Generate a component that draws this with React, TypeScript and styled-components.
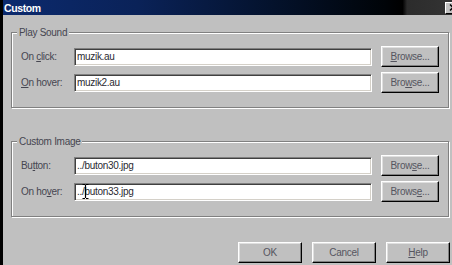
import React from "react";
import styled, { createGlobalStyle } from "styled-components";

const Global = createGlobalStyle`
  html, body {
    margin: 0;
    padding: 0;
    width: 452px;
    height: 265px;
    overflow: hidden;
    background: #c0c0c0;
  }
`;

const Window = styled.div`
  width: 452px;
  height: 265px;
  box-sizing: border-box;
  border-left: 3px solid #000;
  background: #c0c0c0;
  display: flex;
  flex-direction: column;
  overflow: hidden;
  font-family: "Liberation Sans", Arial, sans-serif;
  font-size: 10px;
  letter-spacing: -0.3px;
  color: #464650;
`;

const TitleBar = styled.div`
  height: 15px;
  flex: none;
  display: flex;
  align-items: center;
  justify-content: space-between;
  padding-left: 1px;
  background: linear-gradient(
    90deg,
    #0c2a6e 0%,
    #0a2258 30%,
    #04122c 60%,
    #000408 85%,
    #000 89%,
    #2c2c2c 90%,
    #333 100%
  );
`;

const Title = styled.span`
  color: #fff;
  font-weight: bold;
  font-size: 10.5px;
  letter-spacing: -0.4px;
`;

const CloseBtn = styled.div`
  width: 16px;
  height: 12px;
  margin-right: -9px;
  box-sizing: border-box;
  background: #c0c0c0;
  border: 1px solid;
  border-color: #fff #000 #000 #fff;
  display: flex;
  align-items: center;
  justify-content: center;
`;

const Content = styled.div`
  flex: 1;
  display: flex;
  flex-direction: column;
  padding: 17px 3px 0 8px;
`;

const Group = styled.div<{ $gap?: number }>`
  position: relative;
  height: 76px;
  box-sizing: border-box;
  margin-top: ${(p) => p.$gap ?? 0}px;
  border: 1px solid #808080;
  box-shadow: inset 1px 1px 0 #fff, 1px 1px 0 #fff;
  display: flex;
  flex-direction: column;
  gap: 5px;
  padding-top: 13px;
`;

const Legend = styled.span`
  position: absolute;
  top: -7px;
  left: 5px;
  padding: 0 2px;
  background: #c0c0c0;
  line-height: 13px;
  font-size: 10px;
`;

const Row = styled.div`
  display: flex;
  align-items: center;
  height: 21px;
  padding-left: 9px;
`;

const Label = styled.label`
  width: 53px;
  flex: none;
`;

const FieldWrap = styled.div`
  position: relative;
  width: 298px;
  height: 18px;
  flex: none;
  margin-right: 9px;
`;

const Field = styled.input`
  width: 100%;
  height: 100%;
  box-sizing: border-box;
  margin: 0;
  padding: 0 2px;
  background: #fff;
  border: 1px solid;
  border-color: #808080 #fff #fff #808080;
  box-shadow: inset 1px 1px 0 #404040, inset -1px -1px 0 #d4d0c8;
  font-family: inherit;
  font-size: 10px;
  letter-spacing: -0.3px;
  color: #2a2a32;
  outline: none;
`;

const Cursor = styled.svg`
  position: absolute;
  left: 8px;
  top: 1px;
`;

const Button = styled.button<{ $w: number }>`
  width: ${(p) => p.$w}px;
  height: 21px;
  flex: none;
  box-sizing: border-box;
  margin: 0;
  padding: 0;
  background: #c0c0c0;
  border: 1px solid;
  border-color: #fff #000 #000 #fff;
  box-shadow: inset -1px -1px 0 #808080, inset 1px 1px 0 #dfdfdf;
  font-family: inherit;
  font-size: 10px;
  letter-spacing: -0.3px;
  color: #55555f;
`;

const Footer = styled.div`
  display: flex;
  justify-content: flex-end;
  gap: 10px;
  margin-top: 25px;
  margin-right: -1px;
`;

type RowDef = { label: React.ReactNode; value: string; browse: React.ReactNode; cursor?: boolean };

const u = (s: string, i: number) => (
  <>
    {s.slice(0, i)}
    <u>{s[i]}</u>
    {s.slice(i + 1)}
  </>
);

const FileRow = ({ label, value, browse, cursor }: RowDef) => (
  <Row>
    <Label>{label}</Label>
    <FieldWrap>
      <Field readOnly value={value} />
      {cursor && (
        <Cursor width="7" height="15" viewBox="0 0 7 15">
          <path d="M0.5 0.5h2.5M4 0.5h2.5M3.5 1v13M0.5 14.5h2.5M4 14.5h2.5" stroke="#000" strokeWidth="1.2" fill="none" />
        </Cursor>
      )}
    </FieldWrap>
    <Button $w={58}>{browse}</Button>
  </Row>
);

export default function App() {
  return (
    <Window>
      <Global />
      <TitleBar>
        <Title>Custom</Title>
        <CloseBtn>
          <svg width="8" height="7" viewBox="0 0 8 7">
            <path d="M1 0.5l6 6M7 0.5l-6 6" stroke="#000" strokeWidth="1.5" />
          </svg>
        </CloseBtn>
      </TitleBar>
      <Content>
        <Group>
          <Legend>Play Sound</Legend>
          <FileRow label={<>On {u("click", 0)}:</>} value="muzik.au" browse={u("Browse...", 0)} />
          <FileRow label={<>{u("On", 0)} hover:</>} value="muzik2.au" browse={u("Browse...", 3)} />
        </Group>
        <Group $gap={33}>
          <Legend>Custom Image</Legend>
          <FileRow label={<>{u("Button:", 2)}</>} value="../buton30.jpg" browse={u("Browse...", 4)} />
          <FileRow label={<>On ho<u>v</u>er:</>} value="../buton33.jpg" browse={u("Browse...", 5)} cursor />
        </Group>
        <Footer>
          <Button $w={64}>OK</Button>
          <Button $w={64}>Cancel</Button>
          <Button $w={64}>{u("Help", 0)}</Button>
        </Footer>
      </Content>
    </Window>
  );
}
